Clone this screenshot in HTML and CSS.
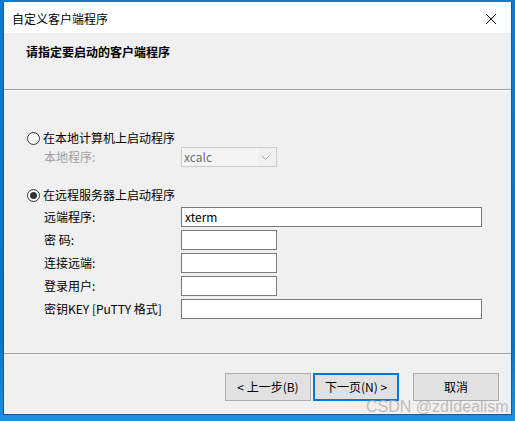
FILE: index.html
```html
<!DOCTYPE html>
<html lang="zh-CN">
<head>
<meta charset="utf-8">
<title>自定义客户端程序</title>
<link rel="stylesheet" href="styles.css">
</head>
<body>
<div class="window">
  <div class="titlebar">
    <span class="title">自定义客户端程序</span>
    <svg class="close" width="12" height="12" viewBox="0 0 12 12"><path d="M1 1 L11 11 M11 1 L1 11" stroke="#111" stroke-width="1" fill="none"/></svg>
  </div>
  <div class="header">
    <span class="header-text">请指定要启动的客户端程序</span>
  </div>
  <div class="content">
    <div class="radio-row">
      <span class="radio"></span>
      <span>在本地计算机上启动程序</span>
    </div>
    <div class="field-row sub-local">
      <span class="label disabled">本地程序:</span>
      <div class="combo">
        <span class="combo-text">xcalc</span>
        <svg class="combo-arrow" width="9" height="5" viewBox="0 0 9 5"><path d="M0.5 0.5 L4.5 4.5 L8.5 0.5" stroke="#a8a8a8" stroke-width="1" fill="none"/></svg>
      </div>
    </div>
    <div class="radio-row radio-remote">
      <span class="radio checked"></span>
      <span>在远程服务器上启动程序</span>
    </div>
    <div class="fields">
      <div class="field-row">
        <span class="label">远端程序:</span>
        <div class="input wide">xterm</div>
      </div>
      <div class="field-row">
        <span class="label">密 码:</span>
        <div class="input short"></div>
      </div>
      <div class="field-row">
        <span class="label">连接远端:</span>
        <div class="input short"></div>
      </div>
      <div class="field-row">
        <span class="label">登录用户:</span>
        <div class="input short"></div>
      </div>
      <div class="field-row">
        <span class="label">密钥KEY [PuTTY 格式]</span>
        <div class="input wide"></div>
      </div>
    </div>
  </div>
  <div class="footer">
    <div class="btn">&lt; 上一步(B)</div>
    <div class="btn default">下一页(N) &gt;</div>
    <div class="btn cancel">取消</div>
  </div>
  <div class="watermark">CSDN @zdIdealism</div>
</div>
</body>
</html>
```
FILE: styles.css
```css
html, body {
  margin: 0;
  padding: 0;
}
body {
  width: 515px;
  height: 421px;
  overflow: hidden;
  background: linear-gradient(180deg, #0f7ad0 0%, #0b72c6 80%, #1e8ee0 100%);
  font-family: "Noto Sans CJK SC", "Liberation Sans", sans-serif;
  font-size: 12px;
  color: #000;
}
.window {
  position: relative;
  box-sizing: border-box;
  margin: 2px 0 0 3px;
  width: 509px;
  height: 413px;
  background: #f0f0f0;
  border: 1px solid #185a98;
  border-top: 0;
  display: flex;
  flex-direction: column;
}
.titlebar {
  height: 31px;
  background: #fff;
  display: flex;
  align-items: center;
  justify-content: space-between;
  padding: 0 14px 0 8px;
  flex: none;
}
.title {
  line-height: 16px;
  margin-top: 2px;
}
.close {
  display: block;
  margin-top: 2px;
}
.header {
  height: 57px;
  box-sizing: border-box;
  border-bottom: 1px solid #a0a0a0;
  box-shadow: 0 1px 0 #ffffff;
  padding: 10px 0 0 22px;
  flex: none;
}
.header-text {
  font-weight: bold;
  line-height: 16px;
}
.content {
  flex: 1;
  padding: 40px 0 0 23px;
  display: flex;
  flex-direction: column;
}
.radio-row {
  height: 16px;
  line-height: 16px;
  display: flex;
  align-items: center;
  gap: 3px;
}
.radio {
  box-sizing: border-box;
  width: 13px;
  height: 13px;
  border: 1px solid #333;
  border-radius: 50%;
  background: #fff;
  position: relative;
  flex: none;
}
.radio.checked::after {
  content: "";
  position: absolute;
  left: 2px;
  top: 2px;
  width: 7px;
  height: 7px;
  border-radius: 50%;
  background: #333;
}
.radio-remote {
  margin-top: 20px;
}
.field-row {
  height: 20px;
  display: flex;
  align-items: center;
  padding-left: 17px;
}
.sub-local {
  margin-top: 1px;
}
.label {
  width: 137px;
  flex: none;
  line-height: 16px;
  white-space: nowrap;
}
.label.disabled {
  color: #a0a0a0;
}
.combo {
  box-sizing: border-box;
  width: 96px;
  height: 20px;
  border: 1px solid #cccccc;
  background: #f0f0f0;
  display: flex;
  align-items: center;
  justify-content: space-between;
}
.combo-text {
  flex: 1;
  align-self: stretch;
  background: #f5f5f5;
  color: #6d6d6d;
  padding-left: 2px;
  line-height: 18px;
  margin-right: 3px;
}
.combo-arrow {
  display: block;
  margin-right: 6px;
}
.fields {
  margin-top: 4px;
  display: flex;
  flex-direction: column;
  gap: 3px;
}
.input {
  box-sizing: border-box;
  height: 20px;
  border: 1px solid #7a7a7a;
  background: #fff;
  padding-left: 3px;
  line-height: 18px;
}
.input.wide {
  width: 301px;
}
.input.short {
  width: 96px;
}
.footer {
  height: 61px;
  box-sizing: border-box;
  border-top: 1px solid #a0a0a0;
  flex: none;
  display: flex;
  justify-content: flex-end;
  align-items: flex-start;
  padding: 19px 12px 0 0;
}
.btn {
  box-sizing: border-box;
  width: 86px;
  height: 28px;
  border: 1px solid #adadad;
  background: #e1e1e1;
  display: flex;
  align-items: center;
  justify-content: center;
  line-height: 16px;
}
.btn.default {
  border: 2px solid #0078d7;
  margin-left: 2px;
}
.btn.cancel {
  margin-left: 14px;
}
.watermark {
  position: absolute;
  left: 362px;
  top: 396px;
  font-family: "Liberation Sans", Arial, sans-serif;
  font-size: 16px;
  line-height: 18px;
  color: rgba(170, 170, 170, 0.75);
  white-space: nowrap;
}
```
